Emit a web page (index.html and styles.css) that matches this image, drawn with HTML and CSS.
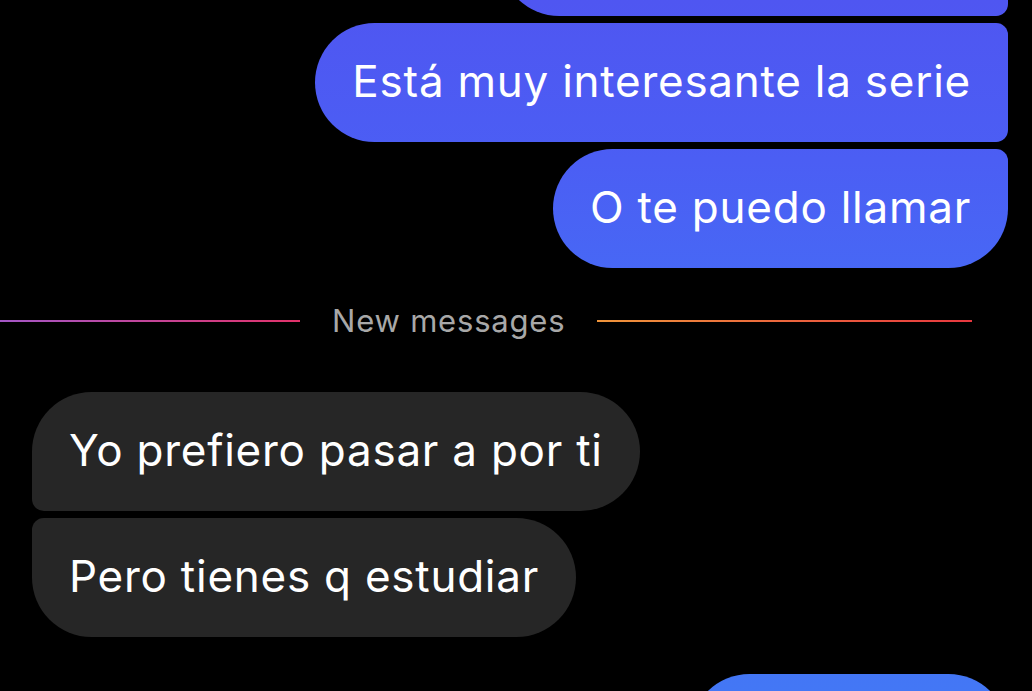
FILE: index.html
```html
<!DOCTYPE html>
<html lang="es">
<head>
<meta charset="utf-8">
<title>Chat</title>
<link rel="stylesheet" href="styles.css">
</head>
<body>
<main class="thread">
  <div class="row out">
    <div class="bubble sent top-stub grp-mid"></div>
  </div>
  <div class="row out">
    <div class="bubble sent grp-mid">Está muy interesante la serie</div>
  </div>
  <div class="row out">
    <div class="bubble sent grp-last">O te puedo llamar</div>
  </div>

  <div class="divider">
    <span class="line line-left"></span>
    <span class="label">New messages</span>
    <span class="line line-right"></span>
  </div>

  <div class="row in">
    <div class="bubble recv grp-first">Yo prefiero pasar a por ti</div>
  </div>
  <div class="row in">
    <div class="bubble recv grp-last">Pero tienes q estudiar</div>
  </div>

  <div class="row out next">
    <div class="bubble sent grp-first bottom-stub"></div>
  </div>
</main>
</body>
</html>
```

FILE: styles.css
```css
* { box-sizing: border-box; }

html, body {
  margin: 0;
  padding: 0;
  background: #000;
  height: 100%;
  overflow: hidden;
}

body {
  font-family: "Inter", "Noto Sans", "Liberation Sans", sans-serif;
  color: #fff;
}

.thread {
  display: flex;
  flex-direction: column;
  gap: 7px;
  margin-top: -103px;
}

.row {
  display: flex;
  padding: 0 24px 0 32px;
}

.row.out { justify-content: flex-end; }
.row.in { justify-content: flex-start; }

.bubble {
  font-size: 44px;
  letter-spacing: 0.75px;
  line-height: 49px;
  padding: 34px 37px 36px;
  min-height: 119px;
  white-space: nowrap;
}

.bubble.sent {
  background: linear-gradient(to bottom, #4f56f1 0px, #4b5ef4 160px, #4768f5 280px, #4377f5 691px);
  background-attachment: fixed;
  border-radius: 60px 12px 12px 60px;
}

.bubble.sent.grp-last { border-radius: 60px 12px 60px 60px; }
.bubble.sent.grp-first { border-radius: 60px 60px 12px 60px; }

.bubble.recv {
  background: #262626;
}
.bubble.recv.grp-first { border-radius: 60px 60px 60px 12px; }
.bubble.recv.grp-last { border-radius: 12px 60px 60px 60px; }

.top-stub { width: 508px; }
.bottom-stub { width: 318px; }

.divider {
  display: flex;
  align-items: center;
  height: 34px;
  margin: 29px 0 47px;
  padding-right: 60px;
}

.line {
  height: 2px;
}
.line-left {
  width: 300px;
  background: linear-gradient(to right, #a457c6, #e2326a);
}
.line-right {
  flex: 1;
  background: linear-gradient(to right, #f0953b, #e8383f);
}
.label {
  font-size: 31px;
  letter-spacing: 0.8px;
  color: #a8a8a8;
  padding: 0 32px;
  line-height: 34px;
}

.next { margin-top: 30px; }
```
